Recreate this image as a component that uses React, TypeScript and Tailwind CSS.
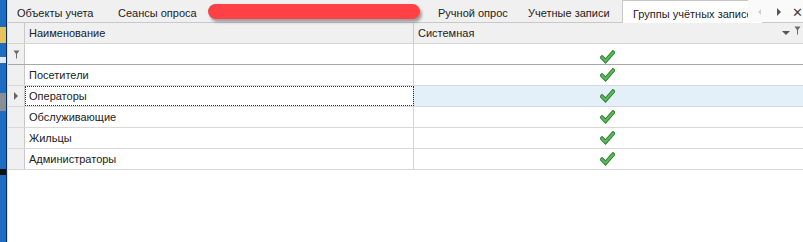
import React from 'react'

const FONT = { fontFamily: '"Liberation Sans", Arial, sans-serif' }

const tabs = [
  { label: 'Объекты учета', w: 'w-[100px]', pl: 'pl-[9px]' },
  { label: 'Сеансы опроса', w: 'w-[90px]', pl: 'pl-[10px]' },
]

const tabsRight = [
  { label: 'Ручной опрос', w: 'w-[90px]', pl: 'pl-[10px]' },
  { label: 'Учетные записи', w: 'w-[104px]', pl: 'pl-[10px]' },
]

const rows = ['Посетители', 'Операторы', 'Обслуживающие', 'Жильцы', 'Администраторы']

function Check() {
  return (
    <svg width="15" height="14" viewBox="0 0 15 14">
      <path d="M2 7.5 L5.5 11 L13 2.5" fill="none" stroke="#2f7d32" strokeWidth="4" strokeLinecap="square" />
      <path d="M2 7.5 L5.5 11 L13 2.5" fill="none" stroke="#5cb85c" strokeWidth="2.2" strokeLinecap="square" />
    </svg>
  )
}

function FilterPin({ className = '' }: { className?: string }) {
  return (
    <svg width="7" height="9" viewBox="0 0 7 9" className={className}>
      <path d="M0.5 0.5 H6.5 L4 4 V8.5 H3 V4 Z" fill="#6b6b6b" />
    </svg>
  )
}

export default function App() {
  return (
    <div className="w-[803px] h-[242px] flex bg-white overflow-hidden text-[11px] text-[#222]" style={FONT}>
      {/* desktop edge behind the window */}
      <div className="w-[6px] flex flex-col bg-[#1d6cc2]">
        <div className="h-[27px]" />
        <div className="h-[16px] bg-[#e8c35a]" />
        <div className="h-[14px]" />
        <div className="h-[6px] bg-[#dfe9f5]" />
        <div className="h-[30px]" />
        <div className="h-[18px] bg-[#8a8f96]" />
        <div className="h-[58px]" />
        <div className="h-[6px] bg-[#111]" />
        <div className="flex-1" />
      </div>
      <div className="w-[1px] bg-[#0d2f56]" />
      <div className="w-[1px] bg-[#dcdcdc]" />

      <div className="flex-1 flex flex-col min-w-0">
        {/* tab strip */}
        <div className="h-[23px] flex items-stretch bg-[#f0f0f0] border-b border-[#c8c8c8] relative whitespace-nowrap">
          {tabs.map((t) => (
            <div key={t.label} className={`${t.w} ${t.pl} shrink-0 flex items-center pt-[5px]`}>
              {t.label}
            </div>
          ))}
          <div className="w-[230px] shrink-0 flex items-center pl-[10px] pt-[1px]">
            <div className="h-[15px] w-[212px] rounded-full bg-[#ff4146] shadow-[2px_3px_3px_rgba(0,0,0,0.35)]" />
          </div>
          {tabsRight.map((t) => (
            <div key={t.label} className={`${t.w} ${t.pl} shrink-0 flex items-center pt-[5px]`}>
              {t.label}
            </div>
          ))}
          <div className="shrink-0 w-[140px] -mb-px bg-white border-l border-t border-[#c8c8c8] flex items-center pl-[10px] pt-[4px] overflow-hidden">
            Группы учётных записей
          </div>
          <div className="absolute right-0 top-0 bottom-0 w-[55px] bg-[#fafafa] flex items-center pt-[2px]">
            <span className="ml-[10px] w-0 h-0 border-t-[3px] border-b-[3px] border-r-[3px] border-t-transparent border-b-transparent border-r-[#cfcfcf]" />
            <span className="ml-[16px] w-0 h-0 border-t-[4px] border-b-[4px] border-l-[4px] border-t-transparent border-b-transparent border-l-[#555]" />
            <span className="ml-[11px] text-[#444] text-[13px] leading-none">✕</span>
          </div>
        </div>

        {/* grid */}
        <div className="flex flex-col">
          <div className="h-[21px] flex bg-[#f0f0f0] border-b border-[#d4d4d4]">
            <div className="w-[17px] border-r border-[#c8c8c8]" />
            <div className="w-[389px] border-r border-[#c8c8c8] pl-[4px] flex items-center">Наименование</div>
            <div className="flex-1 pl-[4px] flex items-center relative">
              Системная
              <span className="absolute right-[13px] top-[8px] w-0 h-0 border-l-[4px] border-r-[4px] border-t-[4px] border-l-transparent border-r-transparent border-t-[#555]" />
              <FilterPin className="absolute right-[2px] top-[3px]" />
            </div>
          </div>
          <div className="h-[21px] flex border-b border-[#a8a8a8]">
            <div className="w-[17px] bg-[#f0f0f0] border-r border-[#c8c8c8] flex items-center justify-center">
              <FilterPin />
            </div>
            <div className="w-[389px] border-r border-[#d4d4d4]" />
            <div className="flex-1 flex items-end justify-center pr-[3px]">
              <Check />
            </div>
          </div>
          {rows.map((name, i) => {
            const sel = i === 1
            return (
              <div key={name} className="h-[21px] flex border-b border-[#d8d8d8]">
                <div className="w-[17px] bg-[#f0f0f0] border-r border-[#c8c8c8] flex items-center justify-center">
                  {sel && (
                    <span className="w-0 h-0 border-t-[4px] border-b-[4px] border-l-[4px] border-t-transparent border-b-transparent border-l-[#666]" />
                  )}
                </div>
                <div
                  className={`w-[389px] border-r border-[#d4d4d4] pl-[4px] flex items-center ${
                    sel ? 'outline outline-1 outline-dotted outline-[#333] -outline-offset-1' : ''
                  }`}
                >
                  {name}
                </div>
                <div className={`flex-1 flex items-center justify-center pr-[3px] ${sel ? 'bg-[#e3eff9]' : ''}`}>
                  <Check />
                </div>
              </div>
            )
          })}
        </div>
        <div className="flex-1" />
      </div>
    </div>
  )
}
